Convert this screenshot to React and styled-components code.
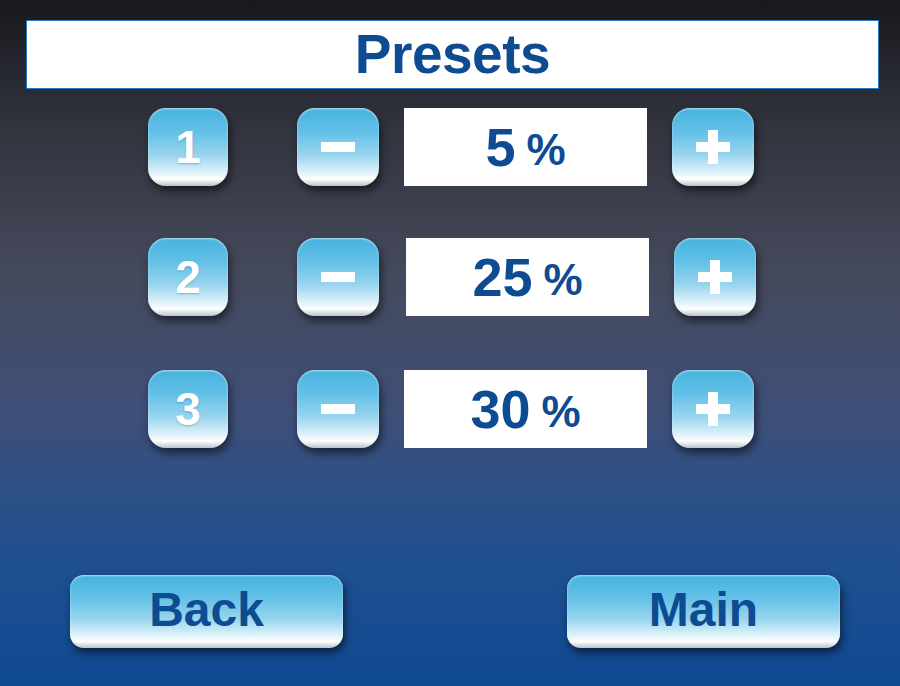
import React, { useState } from "react";
import styled, { createGlobalStyle } from "styled-components";

const GlobalStyle = createGlobalStyle`
  html, body {
    margin: 0;
    padding: 0;
  }
  body {
    font-family: "Liberation Sans", Arial, sans-serif;
  }
`;

const Screen = styled.div`
  width: 900px;
  height: 686px;
  box-sizing: border-box;
  padding: 20px 21px 0 26px;
  display: flex;
  flex-direction: column;
  background: linear-gradient(
    180deg,
    #18181d 0%,
    #31333d 18%,
    #454a5c 40%,
    #3f4f78 60%,
    #21508f 80%,
    #0f4a93 100%
  );
  overflow: hidden;
`;

const TitleBar = styled.div`
  height: 67px;
  background: #fff;
  border: 1px solid #2a78c0;
  display: flex;
  align-items: center;
  justify-content: center;
`;

const Title = styled.h1`
  margin: 0;
  font-size: 55px;
  font-weight: 700;
  color: #0d4c92;
  letter-spacing: -0.5px;
  line-height: 1;
`;

const Rows = styled.div`
  margin-top: 19px;
  padding-left: 122px;
  display: flex;
  flex-direction: column;
`;

const Row = styled.div`
  display: flex;
  align-items: center;
  height: 78px;
  margin-top: ${(p) => p.top || 0}px;
`;

const GlossButton = styled.button`
  box-sizing: border-box;
  width: ${(p) => p.w || 82}px;
  height: 78px;
  margin-left: ${(p) => p.gap || 0}px;
  padding: 0;
  border: none;
  border-radius: 18px;
  cursor: pointer;
  display: flex;
  align-items: center;
  justify-content: center;
  background: linear-gradient(
    180deg,
    #46b2df 0%,
    #62c0e7 30%,
    #98d4ee 60%,
    #e3f4fb 84%,
    #ffffff 91%,
    #b9c3ca 100%
  );
  box-shadow: 2px 5px 8px rgba(0, 0, 0, 0.55), inset 0 1px 2px rgba(255, 255, 255, 0.6);
  color: #fff;
  font-family: "Liberation Sans", Arial, sans-serif;
  font-weight: 700;
  font-size: 46px;
  line-height: 1;
  text-shadow: 0 1px 2px rgba(20, 90, 140, 0.35);
`;

const WideButton = styled(GlossButton)`
  width: 273px;
  height: 73px;
  border-radius: 14px;
  color: #0d4c92;
  font-size: 48px;
  text-shadow: none;
  padding-bottom: 4px;
`;

const ValueBox = styled.div`
  box-sizing: border-box;
  width: 243px;
  height: 78px;
  margin-left: ${(p) => 25 + (p.nudge || 0)}px;
  background: #fff;
  display: flex;
  align-items: center;
  justify-content: center;
  gap: 11px;
  color: #0d4c92;
  font-weight: 700;
`;

const Num = styled.span`
  font-size: 54px;
  line-height: 1;
`;

const Pct = styled.span`
  font-size: 44px;
  line-height: 1;
  padding-top: 6px;
`;

const Footer = styled.div`
  margin-top: 127px;
  padding-left: 44px;
  padding-right: 39px;
  display: flex;
  justify-content: space-between;
`;

const Sign = ({ plus }) => (
  <svg width="38" height="38" viewBox="0 0 38 38">
    <rect x="2" y="14" width="34" height="10" fill="#fff" />
    {plus && <rect x="14" y="2" width="10" height="34" fill="#fff" />}
  </svg>
);

const layout = [
  { top: 0, nudge: 0 },
  { top: 52, nudge: 2 },
  { top: 54, nudge: 0 },
];

export default function App() {
  const [values, setValues] = useState([5, 25, 30]);

  const change = (i, d) =>
    setValues((v) => v.map((x, j) => (j === i ? Math.max(0, Math.min(100, x + d)) : x)));

  return (
    <Screen>
      <GlobalStyle />
      <TitleBar>
        <Title>Presets</Title>
      </TitleBar>
      <Rows>
        {values.map((v, i) => (
          <Row key={i} top={layout[i].top}>
            <GlossButton w={80}>{i + 1}</GlossButton>
            <GlossButton gap={69} onClick={() => change(i, -1)}>
              <Sign />
            </GlossButton>
            <ValueBox nudge={layout[i].nudge}>
              <Num>{v}</Num>
              <Pct>%</Pct>
            </ValueBox>
            <GlossButton gap={25} onClick={() => change(i, 1)}>
              <Sign plus />
            </GlossButton>
          </Row>
        ))}
      </Rows>
      <Footer>
        <WideButton>Back</WideButton>
        <WideButton>Main</WideButton>
      </Footer>
    </Screen>
  );
}
